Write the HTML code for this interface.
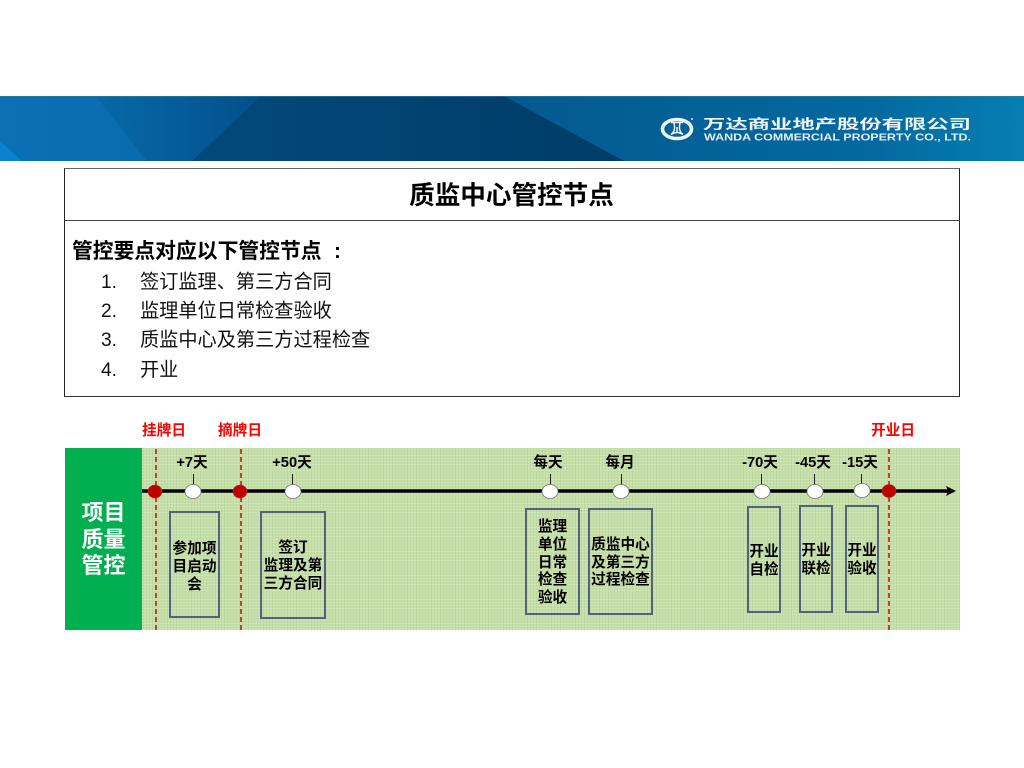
<!DOCTYPE html>
<html lang="zh"><head><meta charset="utf-8"><title>质监中心管控节点</title>
<style>
html,body{margin:0;padding:0;background:#fff}
#p{position:relative;width:1024px;height:768px;overflow:hidden;background:#fff;font-family:"Liberation Sans","Noto Sans CJK SC",sans-serif;color:#000}
.a{position:absolute;white-space:nowrap}
.b{font-weight:700}
.c{text-align:center}
.box{position:absolute;box-sizing:border-box;border:2px solid #53627f;padding-top:4px;display:flex;align-items:center;justify-content:center;text-align:center;font-weight:700;font-size:14.67px;line-height:17.8px;color:#000}
.day{position:absolute;width:70px;text-align:center;font-weight:700;font-size:14.67px;line-height:20px;top:453px}
.red{position:absolute;width:70px;text-align:center;font-weight:700;font-size:14.67px;line-height:20px;top:421px;color:#f00}
.li{position:absolute;left:101px;font-size:19.2px;line-height:26px;color:#111}
.li span{position:absolute;left:39px;white-space:nowrap}
</style></head><body><div id="p">
<svg class="a" style="left:0;top:96px" width="1024" height="65" viewBox="0 0 1024 65">
<defs>
<linearGradient id="g1" x1="0" x2="1" y1="0" y2="0"><stop offset="0" stop-color="#0b70b4"/><stop offset="1" stop-color="#0a6cae"/></linearGradient>
<linearGradient id="g2" x1="0" x2="1" y1="0" y2="0"><stop offset="0" stop-color="#0769a8"/><stop offset="1" stop-color="#02508a"/></linearGradient>
<linearGradient id="g3" x1="0" x2="1" y1="0" y2="0"><stop offset="0" stop-color="#024a7b"/><stop offset="1" stop-color="#013c68"/></linearGradient>
<linearGradient id="g4" x1="0" x2="1" y1="0" y2="0"><stop offset="0" stop-color="#01527f"/><stop offset="0.5" stop-color="#035a8f"/><stop offset="0.85" stop-color="#03699f"/><stop offset="1" stop-color="#067fb0"/></linearGradient>
</defs>
<rect width="1024" height="65" fill="url(#g4)"/>
<polygon points="0,0 96,0 147,65 0,65" fill="url(#g1)"/>
<polygon points="96,0 262,0 192,65 147,65" fill="url(#g2)"/>
<polygon points="261,0 504,0 624,65 192,65" fill="url(#g3)"/>
<polygon points="0,45 22,65 0,65" fill="#0a82cf"/>
<rect width="1024" height="1" fill="#2a7a9a" opacity=".7"/>
<g fill="none" stroke="#eef4f8">
<ellipse cx="677" cy="33" rx="14.500" ry="9.500" stroke-width="3.600"/>
<path d="M671 26.500h12M674 26.500c1 5 1 9-3 12M680 26.500c-1 5-1 9 3 12M677 31v5M672 38c3-2 7-2 10 0" stroke-width="1.500"/>
</g>
<circle cx="692" cy="23" r="1" fill="#dde8ef"/>
<text x="703" y="33" font-family="'Liberation Sans','Noto Sans CJK SC',sans-serif" font-size="13.500" font-weight="700" fill="#eef4f8" textLength="268" lengthAdjust="spacingAndGlyphs">万达商业地产股份有限公司</text>
<text x="704" y="44.500" font-family="'Liberation Sans',sans-serif" font-size="10" font-weight="700" fill="#e4eef4" textLength="267" lengthAdjust="spacingAndGlyphs">WANDA COMMERCIAL PROPERTY CO., LTD.</text>
</svg>

<div class="a" style="left:64px;top:168px;width:894px;height:227px;border:1px solid #222;border-top-color:#666;border-bottom-color:#333"></div>
<div class="a" style="left:65px;top:220px;width:895px;height:1px;background:#444"></div>
<div class="a b c" style="left:65px;top:179px;width:893px;font-size:25.6px;line-height:34px">质监中心管控节点</div>
<div class="a b" style="left:72px;top:238px;font-size:20.8px;line-height:28px">管控要点对应以下管控节点</div>
<div class="a b" style="left:334px;top:238px;font-size:20.8px;line-height:28px">:</div>
<div class="li" style="top:270px">1.<span>签订监理、第三方合同</span></div>
<div class="li" style="top:299px">2.<span>监理单位日常检查验收</span></div>
<div class="li" style="top:328px">3.<span>质监中心及第三方过程检查</span></div>
<div class="li" style="top:358px">4.<span>开业</span></div>

<div class="red" style="left:129px">挂牌日</div>
<div class="red" style="left:205px">摘牌日</div>
<div class="red" style="left:858px">开业日</div>

<div class="a" style="left:65px;top:448px;width:895px;height:182px;background-color:#c6dfa9;background-image:repeating-linear-gradient(0deg,rgba(255,255,255,.16) 0 1px,transparent 1px 3px),repeating-linear-gradient(90deg,rgba(120,160,80,.14) 0 1px,transparent 1px 3px)"></div>
<div class="a" style="left:65px;top:448px;width:77px;height:182px;background:#00b050"></div>
<div class="a b c" style="left:65px;top:500px;width:77px;font-size:22px;line-height:26.600px;color:#fff;white-space:normal">项目<br>质量<br>管控</div>

<svg class="a" style="left:0;top:440px" width="1024" height="200" viewBox="0 440 1024 200">
<g stroke="#c00000" stroke-width="1.400" stroke-dasharray="5 3" fill="none">
<line x1="156" y1="449" x2="156" y2="630"/>
<line x1="241" y1="449" x2="241" y2="630"/>
<line x1="889" y1="449" x2="889" y2="630"/>
</g>
<line x1="142" y1="491" x2="950" y2="491" stroke="#000" stroke-width="3.600"/>
<polygon points="946,486 956,491 946,496 948,491" fill="#000"/>
<g stroke="#222" stroke-width="1">
<line x1="193.500" y1="474" x2="193.500" y2="485"/>
<line x1="292.500" y1="474" x2="292.500" y2="485"/>
<line x1="550.500" y1="474" x2="550.500" y2="485"/>
<line x1="621.500" y1="474" x2="621.500" y2="485"/>
<line x1="761.500" y1="474" x2="761.500" y2="485"/>
<line x1="814.500" y1="474" x2="814.500" y2="485"/>
<line x1="861.500" y1="474" x2="861.500" y2="485"/>
</g>
<g fill="#fff" stroke="#777" stroke-width=".8">
<ellipse cx="193" cy="491.500" rx="8" ry="7"/>
<ellipse cx="293" cy="491.500" rx="8" ry="7"/>
<ellipse cx="550" cy="491.500" rx="8" ry="7"/>
<ellipse cx="621" cy="491.500" rx="8" ry="7"/>
<ellipse cx="762" cy="491.500" rx="8" ry="7"/>
<ellipse cx="815" cy="491.500" rx="8" ry="7"/>
<ellipse cx="862" cy="490.500" rx="8" ry="7"/>
</g>
<g fill="#c00000" stroke="#a33" stroke-width=".6">
<ellipse cx="155" cy="491.500" rx="7" ry="6.500"/>
<ellipse cx="240" cy="491.500" rx="7" ry="6.500"/>
<ellipse cx="889" cy="491" rx="7" ry="6.500"/>
</g>
</svg>

<div class="day" style="left:157px">+7天</div>
<div class="day" style="left:257px">+50天</div>
<div class="day" style="left:513px">每天</div>
<div class="day" style="left:585px">每月</div>
<div class="day" style="left:725px">-70天</div>
<div class="day" style="left:778px">-45天</div>
<div class="day" style="left:825px">-15天</div>

<div class="box" style="left:169px;top:511px;width:51px;height:107px;padding-top:7px">参加项<br>目启动<br>会</div>
<div class="box" style="left:260px;top:511px;width:66px;height:108px">签订<br>监理及第<br>三方合同</div>
<div class="box" style="left:525px;top:508px;width:55px;height:107px">监理<br>单位<br>日常<br>检查<br>验收</div>
<div class="box" style="left:588px;top:508px;width:65px;height:107px">质监中心<br>及第三方<br>过程检查</div>
<div class="box" style="left:747px;top:506px;width:34px;height:107px">开业<br>自检</div>
<div class="box" style="left:799px;top:505px;width:34px;height:108px">开业<br>联检</div>
<div class="box" style="left:845px;top:505px;width:34px;height:108px">开业<br>验收</div>
</div></body></html>
